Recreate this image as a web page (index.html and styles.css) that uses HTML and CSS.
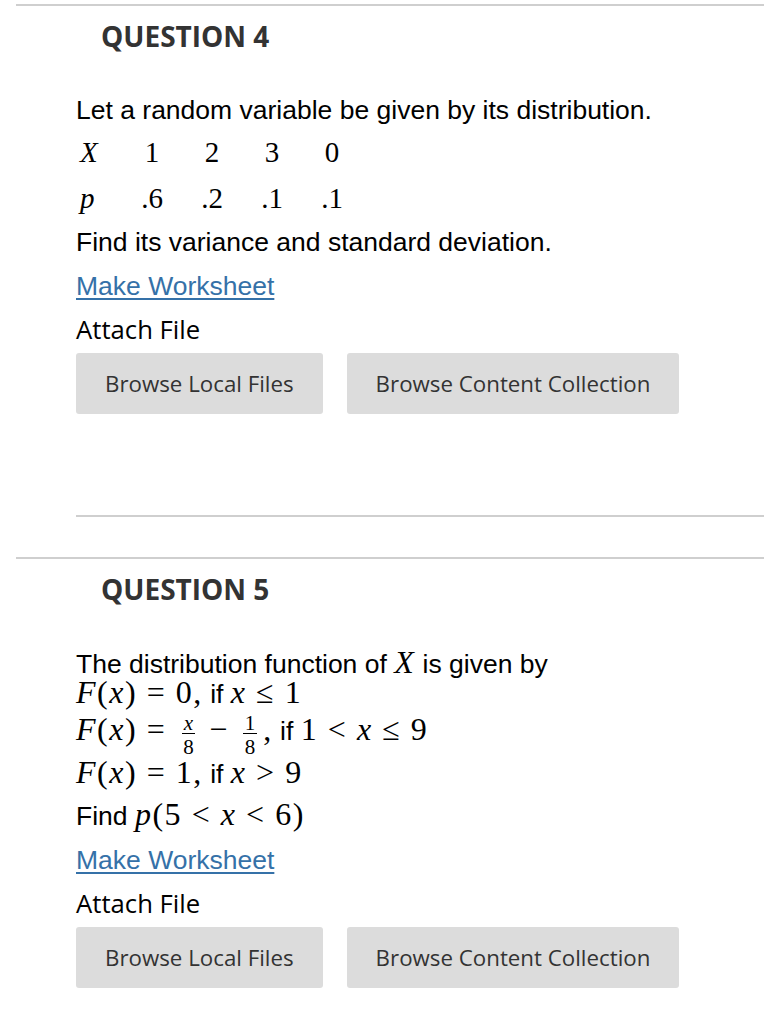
FILE: index.html
```html
<!DOCTYPE html>
<html lang="en">
<head>
    <meta charset="UTF-8">
    <title>Questions</title>
    <link rel="stylesheet" href="styles.css">
</head>
<body>
    <div class="question">
        <h3 class="q-title">QUESTION 4</h3>
        <div class="q-body">
            <p class="line">Let a random variable be given by its distribution.</p>
            <table class="dist">
                <tr>
                    <td class="var"><i>X</i></td>
                    <td>1</td>
                    <td>2</td>
                    <td>3</td>
                    <td>0</td>
                </tr>
                <tr>
                    <td class="var"><i>p</i></td>
                    <td>.6</td>
                    <td>.2</td>
                    <td>.1</td>
                    <td>.1</td>
                </tr>
            </table>
            <p class="line">Find its variance and standard deviation.</p>
            <p class="line"><a href="#" class="worksheet">Make Worksheet</a></p>
            <p class="line attach">Attach File</p>
            <div class="buttons">
                <button class="browse local">Browse Local Files</button>
                <button class="browse content">Browse Content Collection</button>
            </div>
            <div class="q-footer"></div>
        </div>
    </div>

    <div class="question">
        <h3 class="q-title">QUESTION 5</h3>
        <div class="q-body">
            <div class="formula">
                <div class="f-line">The distribution function of <span class="m"><i>X</i></span> is given by</div>
                <div class="f-line"><span class="m"><i>F</i>(<i>x</i>)<span class="rel">=</span>0,</span> if <span class="m"><i>x</i><span class="rel">&le;</span>1</span></div>
                <div class="f-line tall"><span class="m"><i>F</i>(<i>x</i>)<span class="rel">=</span><span class="frac"><span class="num"><i>x</i></span><span class="den">8</span></span><span class="bin">&minus;</span><span class="frac"><span class="num">1</span><span class="den">8</span></span>,</span> if <span class="m">1<span class="rel">&lt;</span><i>x</i><span class="rel">&le;</span>9</span></div>
                <div class="f-line"><span class="m"><i>F</i>(<i>x</i>)<span class="rel">=</span>1,</span> if <span class="m"><i>x</i><span class="rel">&gt;</span>9</span></div>
            </div>
            <p class="line">Find <span class="m"><i>p</i>(5<span class="rel">&lt;</span><i>x</i><span class="rel">&lt;</span>6)</span></p>
            <p class="line"><a href="#" class="worksheet">Make Worksheet</a></p>
            <p class="line attach">Attach File</p>
            <div class="buttons">
                <button class="browse local">Browse Local Files</button>
                <button class="browse content">Browse Content Collection</button>
            </div>
        </div>
    </div>
</body>
</html>
```

FILE: styles.css
```css
body {
    margin: 0;
    font-family: "Liberation Sans", Arial, sans-serif;
    font-size: 26.5px;
    color: #000;
    background-color: #fff;
}

.question {
    margin: 4px 0 0 16px;
    border-top: 2px solid #cfcfcf;
}

.question + .question {
    margin-top: 40px;
}

.q-title {
    margin: 13px 0 35px 0;
    padding-left: 85px;
    font-family: "Open Sans", sans-serif;
    font-weight: 700;
    font-size: 28px;
    line-height: 34px;
    color: #333;
}

.q-body {
    padding-left: 60px;
}

.line {
    margin: 0;
    height: 44px;
    line-height: 44px;
}

.attach {
    font-family: "Open Sans", sans-serif;
    font-size: 25.7px;
}

.worksheet {
    color: #3571a8;
    text-decoration: underline;
    text-underline-offset: 3px;
}

/* distribution table */
.dist {
    border-collapse: collapse;
    font-family: "Liberation Serif", "Times New Roman", serif;
    font-size: 29px;
}

.dist td {
    width: 60px;
    height: 44px;
    padding: 0;
    text-align: center;
}

.dist tr:first-child td {
    height: 41px;
    padding-bottom: 3px;
}

.dist td.var {
    width: 42px;
    padding-left: 4px;
    text-align: left;
}

/* math in question 5 */
.m {
    font-family: "Liberation Serif", "Times New Roman", serif;
    font-size: 32px;
    line-height: 1;
    letter-spacing: 1.5px;
}

.rel {
    margin: 0 0.3em;
}

.bin {
    margin: 0 0.25em;
}

.formula {
    padding-top: 5px;
    margin-bottom: 8px;
}

.f-line {
    height: 30px;
    line-height: 30px;
}

.f-line.tall {
    height: 50px;
    line-height: 50px;
}

.frac {
    display: inline-flex;
    flex-direction: column;
    align-items: center;
    vertical-align: 10px;
    margin: -6px 6px;
    font-size: 21px;
    line-height: 16px;
    letter-spacing: 0;
}

.frac .num {
    padding: 0 2px 2px 2px;
    border-bottom: 1px solid #000;
}

.frac .den {
    padding-top: 4.5px;
}

/* attach buttons */
.buttons {
    display: flex;
    gap: 24px;
    margin-top: 1px;
}

.browse {
    height: 61px;
    padding: 0 29px;
    border: none;
    border-radius: 3px;
    background-color: #dcdcdc;
    color: #333;
    font-family: "Open Sans", sans-serif;
    font-size: 22.3px;
    cursor: pointer;
}

.q-footer {
    margin-top: 101px;
    border-top: 2px solid #cfcfcf;
}
```
